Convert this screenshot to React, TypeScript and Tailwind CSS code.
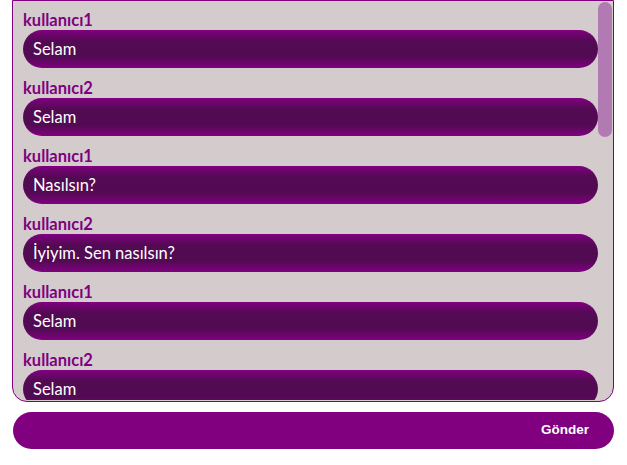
const messages = [
  { user: "kullanıcı1", text: "Selam" },
  { user: "kullanıcı2", text: "Selam" },
  { user: "kullanıcı1", text: "Nasılsın?" },
  { user: "kullanıcı2", text: "İyiyim. Sen nasılsın?" },
  { user: "kullanıcı1", text: "Selam" },
  { user: "kullanıcı2", text: "Selam" },
];

export default function App() {
  return (
    <div className="w-[627px] h-[465px] bg-white font-['Lato',sans-serif]">
      <div className="ml-3 w-[602px] flex flex-col">
        {/* mesaj kutusu */}
        <div className="relative h-[402px] border border-[#800080] rounded-b-[15px] bg-[#d4cbcc] overflow-hidden">
          <div className="h-full overflow-hidden pl-[10px] pr-[15px] -mt-px">
            {messages.map((m, i) => (
              <div key={i} className="pt-[10px]">
                <div className="h-5 leading-5 text-[16.5px] font-bold text-[#800080]">
                  {m.user}
                </div>
                <div className="h-[38px] flex items-center pl-[10px] rounded-full text-white text-[16.5px] bg-[linear-gradient(to_bottom,#800080,#520a52_30%,#520a52_70%,#800080)]">
                  {m.text}
                </div>
              </div>
            ))}
          </div>
          {/* kaydırma çubuğu */}
          <div className="absolute top-[1px] right-[1px] w-[14px] h-[135px] rounded-full bg-[#b27ab2]" />
        </div>

        {/* gönder butonu */}
        <button className="mt-[10px] ml-px h-[37px] rounded-full bg-[#800080] text-white font-bold text-[13.5px] font-['Liberation_Sans',sans-serif] text-right pr-[25px]">
          Gönder
        </button>
      </div>
    </div>
  );
}
